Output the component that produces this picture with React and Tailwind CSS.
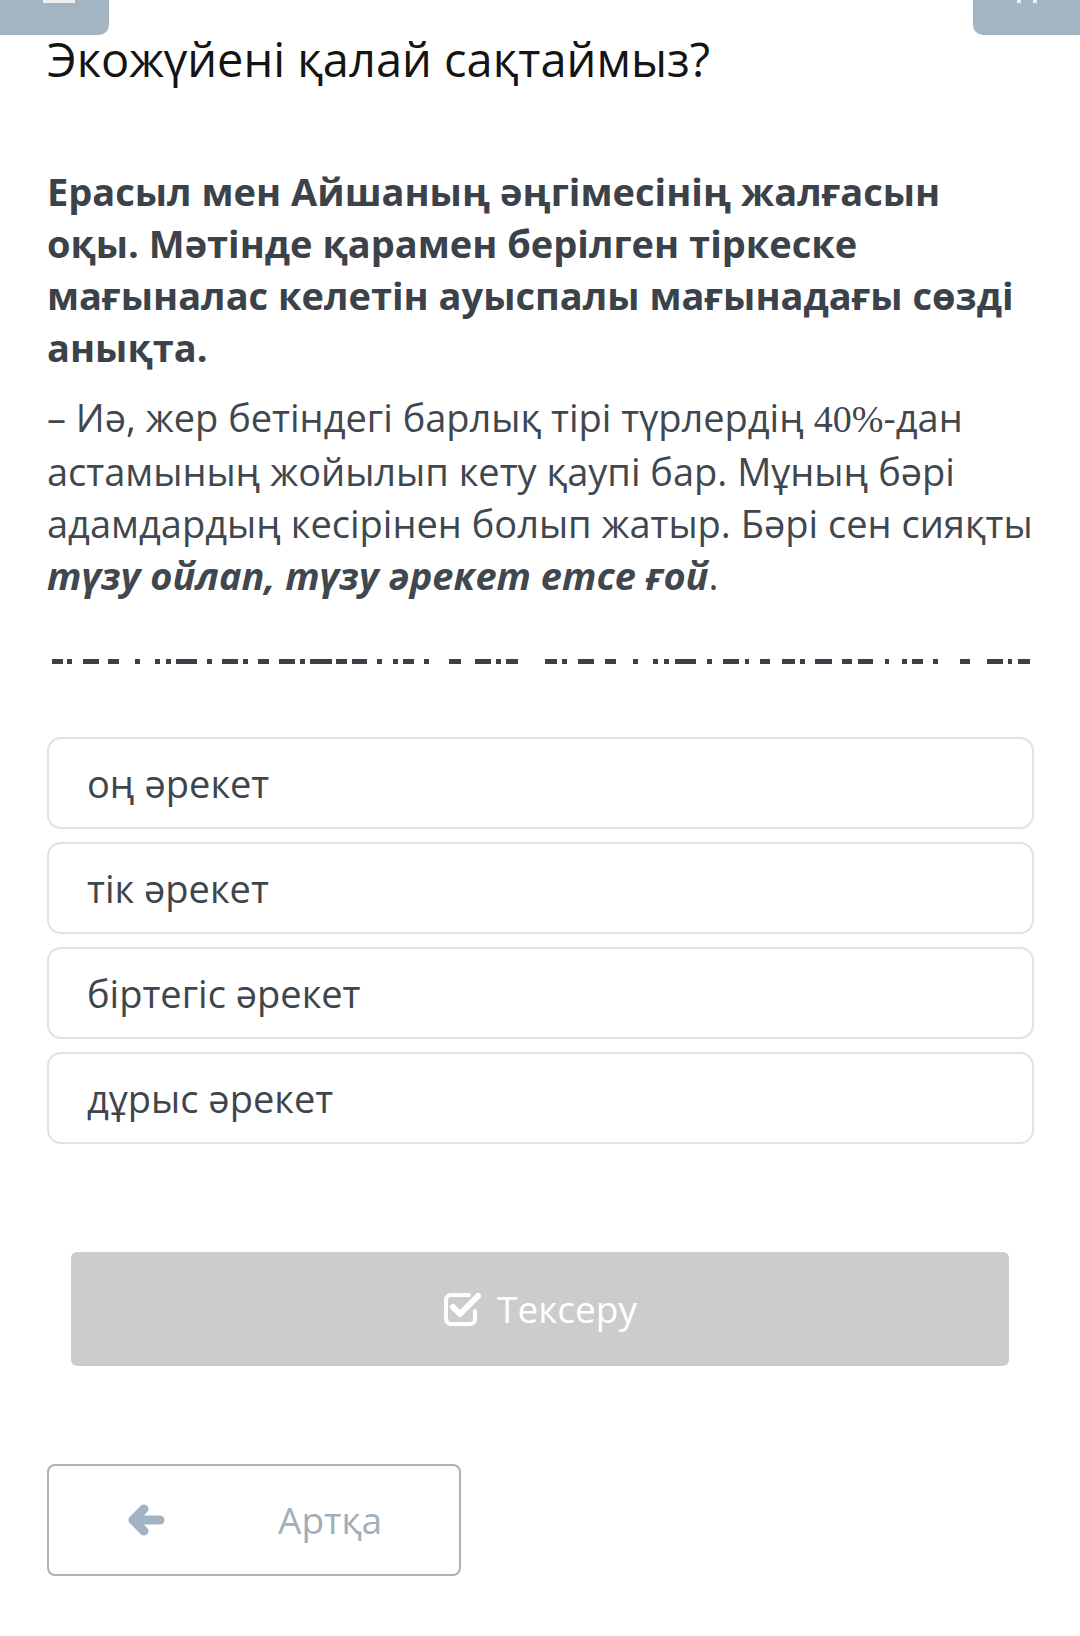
const options = ["оң әрекет", "тік әрекет", "біртегіс әрекет", "дұрыс әрекет"];

// dashes of the answer line: [x, width]
const dashes = [
  [52, 11], [67, 5], [83, 16], [108, 11], [135, 5], [155, 5], [166, 5], [176, 21],
  [207, 5], [222, 16], [243, 5], [258, 11], [279, 16], [300, 5], [310, 22], [336, 11],
  [352, 15], [377, 5], [393, 5], [403, 11], [424, 5], [449, 12], [475, 16], [496, 5],
  [506, 12],
  [545, 12], [562, 5], [578, 16], [605, 11], [633, 5], [653, 5], [664, 5], [675, 21],
  [707, 5], [723, 16], [745, 4], [760, 10], [782, 13], [800, 5], [815, 17], [842, 10],
  [858, 15], [885, 4], [902, 5], [912, 11], [933, 5], [960, 10], [987, 16], [1008, 4],
  [1018, 12],
];

function CheckSquareIcon() {
  return (
    <svg width="40" height="36" viewBox="0 0 40 36" fill="none">
      <path
        d="M26 4H8a5 5 0 0 0-5 5v19a5 5 0 0 0 5 5h19a5 5 0 0 0 5-5v-8"
        stroke="white"
        strokeWidth="4"
        strokeLinecap="round"
      />
      <path
        d="M10 16l7 7L35 5"
        stroke="white"
        strokeWidth="6"
        strokeLinecap="round"
        strokeLinejoin="round"
      />
    </svg>
  );
}

function ArrowIcon() {
  return (
    <svg width="38" height="32" viewBox="0 0 38 32" fill="none">
      <path d="M33 16H8" stroke="#9fb3c5" strokeWidth="9" strokeLinecap="round" />
      <path
        d="M17 5L6 16l11 11"
        stroke="#9fb3c5"
        strokeWidth="9"
        strokeLinecap="round"
        strokeLinejoin="round"
      />
    </svg>
  );
}

export default function App() {
  return (
    <div
      className="w-[1080px] h-[1636px] bg-white overflow-hidden"
      style={{ fontFamily: '"Open Sans", "Noto Sans", sans-serif' }}
    >
      {/* top buttons */}
      <div className="flex justify-between h-[35px]">
        <div className="w-[109px] h-[35px] bg-[#a3b5c3] rounded-br-[10px] flex justify-center">
          <div className="w-[32px] h-[3px] bg-white/80 ml-[8px]" />
        </div>
        <div className="w-[107px] h-[35px] bg-[#a3b5c3] rounded-bl-[10px] flex justify-center gap-[12px]">
          <div className="w-[4px] h-[3px] bg-white/80" />
          <div className="w-[4px] h-[3px] bg-white/80" />
        </div>
      </div>

      <div className="pl-[47px] pr-[46px]">
        <h1 className="text-[47px] leading-[48px] text-[#141414] font-normal">
          Экожүйені қалай сақтаймыз?
        </h1>

        <p className="mt-[82px] text-[38px] leading-[52px] font-bold text-[#3b424a]">
          Ерасыл мен Айшаның әңгімесінің жалғасын оқы. Мәтінде қарамен берілген тіркеске
          мағыналас келетін ауыспалы мағынадағы сөзді анықта.
        </p>

        <p className="mt-[18px] text-[38px] leading-[52px] text-[#40474e]">
          – Иә, жер бетіндегі барлық тірі түрлердің{" "}
          <span style={{ fontFamily: '"Liberation Serif", serif' }}>40%</span>-дан астамының
          жойылып кету қаупі бар. Мұның бәрі адамдардың кесірінен болып жатыр. Бәрі сен
          сияқты <b className="italic">түзу ойлап, түзу әрекет етсе ғой</b>.
        </p>
      </div>

      {/* answer line */}
      <svg width="1080" height="6" className="block mt-[58px]">
        {dashes.map(([x, w], i) => (
          <rect key={i} x={x} y="0" width={w} height="5" fill="#3b4148" />
        ))}
      </svg>

      <div className="pl-[47px] pr-[46px] mt-[72px] flex flex-col gap-[13px]">
        {options.map((o) => (
          <div
            key={o}
            className="h-[92px] border-2 border-[#e2e2e2] rounded-[14px] flex items-center pl-[38px] text-[38px] text-[#3e454c]"
          >
            {o}
          </div>
        ))}
      </div>

      <div className="px-[71px] mt-[108px]">
        <div className="h-[114px] bg-[#cccccc] rounded-[6px] flex items-center justify-center gap-[14px] text-white text-[37px]">
          <CheckSquareIcon />
          <span>Тексеру</span>
        </div>
      </div>

      <div className="pl-[47px] mt-[98px]">
        <div className="w-[414px] h-[112px] border-2 border-[#a9b4bc] rounded-[8px] flex items-center">
          <div className="ml-[78px]">
            <ArrowIcon />
          </div>
          <span className="ml-[113px] text-[37px] text-[#a2aeb9]">Артқа</span>
        </div>
      </div>
    </div>
  );
}
